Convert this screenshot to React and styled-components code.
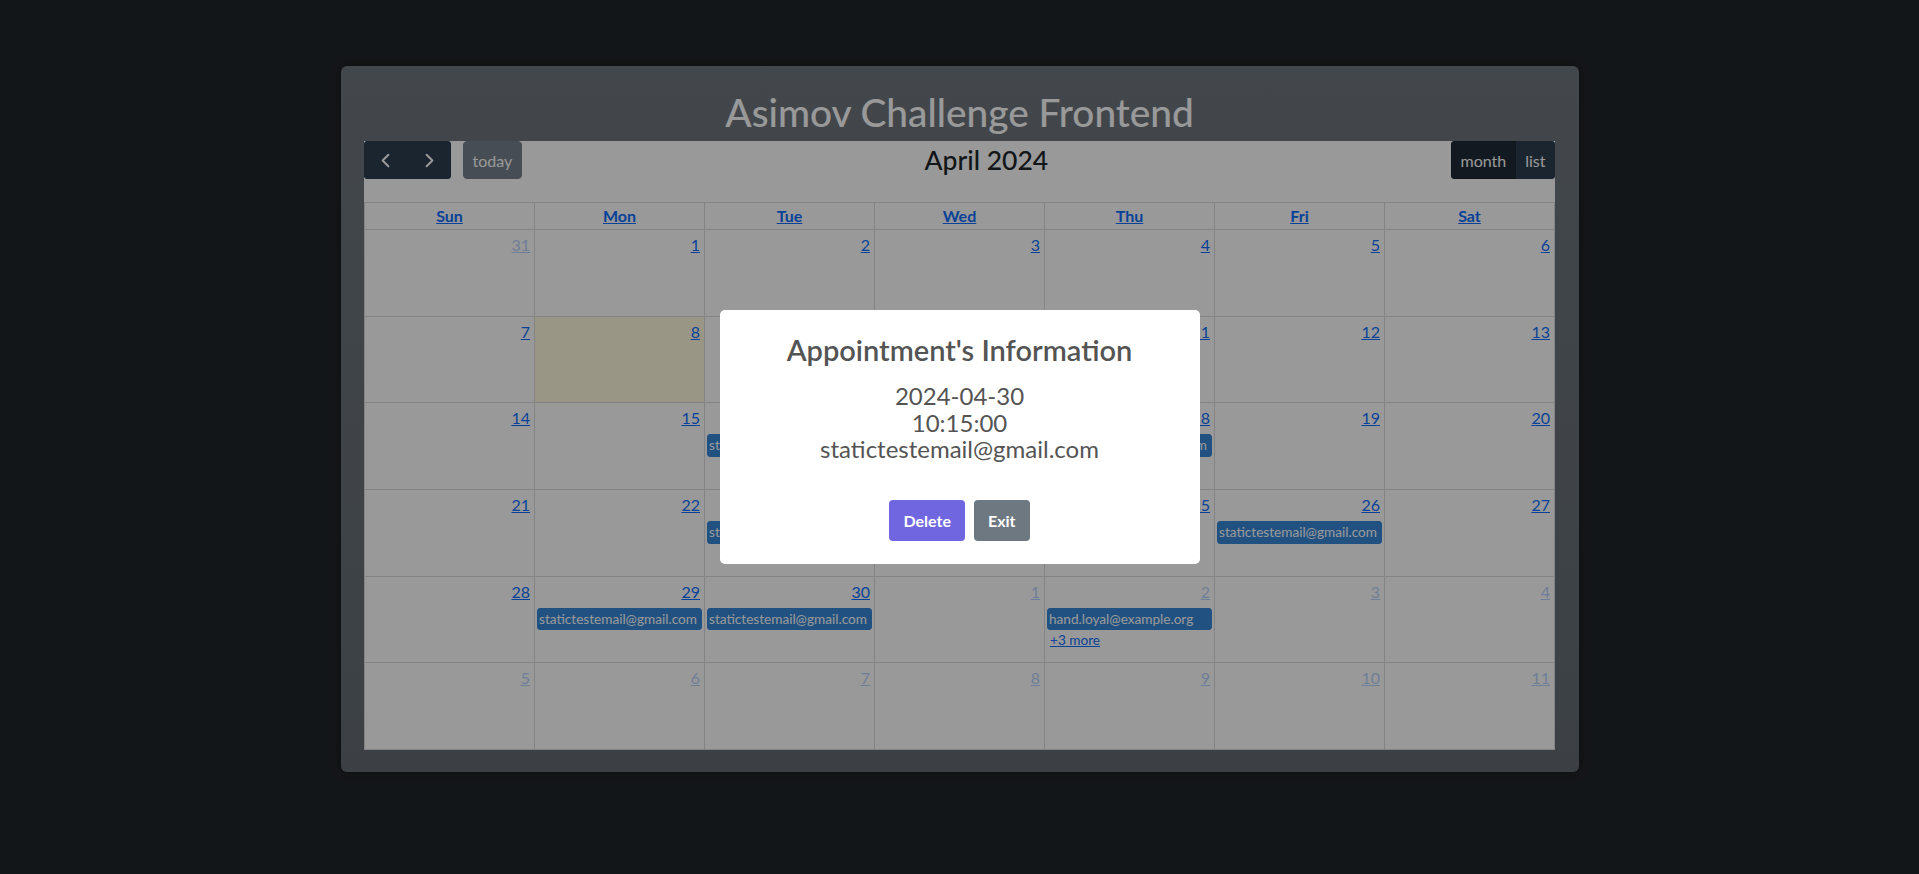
import React from 'react';
import styled, { createGlobalStyle } from 'styled-components';
import { ChevronLeft, ChevronRight } from 'lucide-react';

const GlobalStyle = createGlobalStyle`
  * { box-sizing: border-box; }
  html, body {
    margin: 0;
    padding: 0;
    background: #212529;
  }
  body {
    font-family: Lato, "Liberation Sans", sans-serif;
    font-size: 16px;
    line-height: 1.5;
    color: #212529;
  }
`;

const Page = styled.div`
  min-height: 874px;
  display: flex;
  justify-content: center;
  align-items: flex-start;
  padding-top: 66px;
`;

const Card = styled.div`
  width: 1238px;
  padding: 22px 23.5px 22px;
  border-radius: 6px;
  background: linear-gradient(180deg, #6f777f, #646c74);
  box-shadow: 0 0 10px rgba(0, 0, 0, 0.35);
`;

const AppTitle = styled.h1`
  margin: 0 0 5px;
  font-size: 38.8px;
  font-weight: 500;
  line-height: 48px;
  text-align: center;
  color: #fff;
`;

const Calendar = styled.div`
  background: #fff;
`;

const Toolbar = styled.div`
  display: flex;
  justify-content: space-between;
  align-items: center;
  margin-bottom: 23px;
`;

const Chunk = styled.div`
  display: flex;
  align-items: center;
  gap: 12px;
`;

const ButtonGroup = styled.div`
  display: flex;
  border-radius: 4px;
  overflow: hidden;
`;

const ToolButton = styled.button`
  height: 38px;
  padding: 0 ${p => (p.$icon ? '0' : '8.5px')};
  width: ${p => (p.$icon ? '43.5px' : 'auto')};
  display: flex;
  align-items: center;
  justify-content: center;
  border: 1px solid ${p => (p.$active ? '#1a252f' : '#2c3e50')};
  border-radius: ${p => (p.$single ? '4px' : '0')};
  background: ${p => (p.$active ? '#1e2b37' : '#2c3e50')};
  color: #fff;
  font-family: inherit;
  font-size: 16px;
  opacity: ${p => (p.disabled ? 0.65 : 1)};
`;

const MonthTitle = styled.h2`
  margin: 0;
  font-size: 26.5px;
  font-weight: 500;
  line-height: 34px;
  color: #212529;
`;

const Grid = styled.div`
  display: grid;
  grid-template-columns: repeat(7, 1fr);
  grid-template-rows: 27px repeat(6, 1fr);
  height: 548px;
  border-top: 1px solid #ddd;
  border-left: 1px solid #ddd;
`;

const HeadCell = styled.div`
  border-right: 1px solid #ddd;
  border-bottom: 1px solid #ddd;
  padding: 1px 4px;
  text-align: center;
  line-height: 24px;

  a {
    font-weight: 700;
    color: #0d6efd;
    text-decoration: underline;
  }
`;

const DayCell = styled.div`
  display: flex;
  flex-direction: column;
  min-width: 0;
  border-right: 1px solid #ddd;
  border-bottom: 1px solid #ddd;
  background: ${p => (p.$today ? 'rgba(255, 220, 40, 0.15)' : 'transparent')};
`;

const DayTop = styled.div`
  display: flex;
  flex-direction: row-reverse;
  opacity: ${p => (p.$other ? 0.3 : 1)};
`;

const DayNumber = styled.a`
  padding: 3px 4px 4px;
  line-height: 24px;
  color: #0d6efd;
  text-decoration: underline;
`;

const Event = styled.div`
  margin: 0 2px;
  padding: 0 1px;
  border: 1px solid #3788d8;
  border-radius: 3px;
  background: #3788d8;
  color: #fff;
  font-size: 13.6px;
  line-height: 20.6px;
  white-space: nowrap;
  overflow: hidden;
`;

const MoreLink = styled.a`
  align-self: flex-start;
  margin: 0 2px;
  padding: 3px 3px 0;
  font-size: 13.6px;
  line-height: 15px;
  color: #0d6efd;
  text-decoration: underline;
`;

const Backdrop = styled.div`
  position: fixed;
  inset: 0;
  display: flex;
  align-items: center;
  justify-content: center;
  background: rgba(0, 0, 0, 0.4);
`;

const Popup = styled.div`
  width: 480px;
  padding: 22px 16px 23px;
  border-radius: 5px;
  background: #fff;
  display: flex;
  flex-direction: column;
  align-items: center;
`;

const PopupTitle = styled.h2`
  margin: 0;
  font-size: 29px;
  font-weight: 600;
  line-height: 36px;
  color: #545454;
`;

const PopupText = styled.div`
  margin-top: 15px;
  font-size: 24px;
  line-height: 26.6px;
  text-align: center;
  color: #545454;
`;

const Actions = styled.div`
  display: flex;
  gap: 9px;
  margin-top: 37px;
`;

const PopupButton = styled.button`
  height: 41px;
  padding: 0 14px;
  border: 0;
  border-radius: 4px;
  background: ${p => (p.$variant === 'confirm' ? '#7066e0' : '#6e7881')};
  color: #fff;
  font-family: inherit;
  font-size: 16px;
  font-weight: 700;
`;

const email = 'statictestemail@gmail.com';

const weeks = [
  [{ d: 31, o: true }, { d: 1 }, { d: 2 }, { d: 3 }, { d: 4 }, { d: 5 }, { d: 6 }],
  [{ d: 7 }, { d: 8, today: true }, { d: 9 }, { d: 10 }, { d: 11 }, { d: 12 }, { d: 13 }],
  [{ d: 14 }, { d: 15 }, { d: 16, ev: [email] }, { d: 17 }, { d: 18, ev: [email] }, { d: 19 }, { d: 20 }],
  [{ d: 21 }, { d: 22 }, { d: 23, ev: [email] }, { d: 24 }, { d: 25 }, { d: 26, ev: [email] }, { d: 27 }],
  [
    { d: 28 },
    { d: 29, ev: [email] },
    { d: 30, ev: [email] },
    { d: 1, o: true },
    { d: 2, o: true, ev: ['hand.loyal@example.org'], more: 3 },
    { d: 3, o: true },
    { d: 4, o: true },
  ],
  [5, 6, 7, 8, 9, 10, 11].map(d => ({ d, o: true })),
];

const dayNames = ['Sun', 'Mon', 'Tue', 'Wed', 'Thu', 'Fri', 'Sat'];

const App = () => {
  return (
    <>
      <GlobalStyle />
      <Page>
        <Card>
          <AppTitle>Asimov Challenge Frontend</AppTitle>
          <Calendar>
            <Toolbar>
              <Chunk>
                <ButtonGroup>
                  <ToolButton $icon aria-label="prev">
                    <ChevronLeft size={23} strokeWidth={2.1} />
                  </ToolButton>
                  <ToolButton $icon aria-label="next">
                    <ChevronRight size={23} strokeWidth={2.1} />
                  </ToolButton>
                </ButtonGroup>
                <ToolButton $single disabled>today</ToolButton>
              </Chunk>
              <MonthTitle>April 2024</MonthTitle>
              <Chunk>
                <ButtonGroup>
                  <ToolButton $active>month</ToolButton>
                  <ToolButton>list</ToolButton>
                </ButtonGroup>
              </Chunk>
            </Toolbar>

            <Grid>
              {dayNames.map(name => (
                <HeadCell key={name}>
                  <a>{name}</a>
                </HeadCell>
              ))}
              {weeks.map((week, w) =>
                week.map((day, i) => (
                  <DayCell key={`${w}-${i}`} $today={day.today}>
                    <DayTop $other={day.o}>
                      <DayNumber>{day.d}</DayNumber>
                    </DayTop>
                    {(day.ev || []).map((title, k) => (
                      <Event key={k}>{title}</Event>
                    ))}
                    {day.more && <MoreLink>+{day.more} more</MoreLink>}
                  </DayCell>
                ))
              )}
            </Grid>
          </Calendar>
        </Card>
      </Page>

      <Backdrop>
        <Popup>
          <PopupTitle>Appointment's Information</PopupTitle>
          <PopupText>
            2024-04-30
            <br />
            10:15:00
            <br />
            {email}
          </PopupText>
          <Actions>
            <PopupButton $variant="confirm">Delete</PopupButton>
            <PopupButton>Exit</PopupButton>
          </Actions>
        </Popup>
      </Backdrop>
    </>
  );
};

export default App;
